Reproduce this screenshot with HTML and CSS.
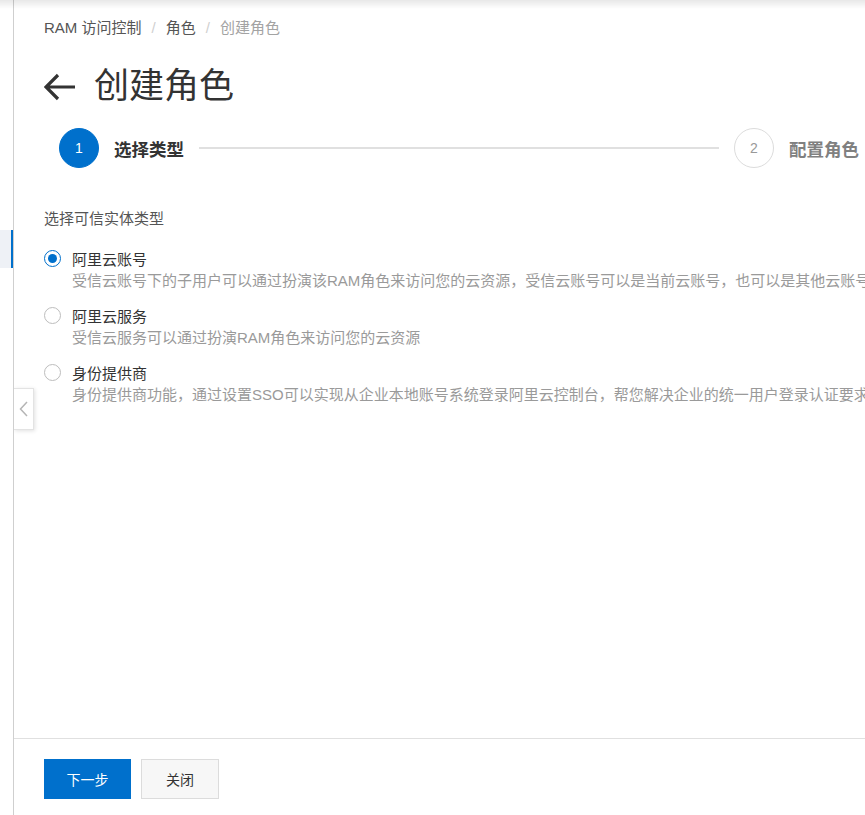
FILE: index.html
```html
<!DOCTYPE html>
<html lang="zh-CN">
<head>
<meta charset="utf-8">
<title>创建角色</title>
<link rel="stylesheet" href="styles.css">
</head>
<body>
<div class="topshadow"></div>
<div class="layout">
  <aside class="sidebar">
    <div class="side-active"></div>
  </aside>
  <main class="main">
    <button class="collapse" type="button" aria-label="收起">
      <svg width="9" height="16" viewBox="0 0 9 16"><path d="M8 1 L1.5 8 L8 15" fill="none" stroke="#b5b5b5" stroke-width="1.5"/></svg>
    </button>
    <div class="content">
      <nav class="breadcrumb">
        <span class="crumb">RAM 访问控制</span><span class="sep">/</span><span class="crumb">角色</span><span class="sep">/</span><span class="crumb current">创建角色</span>
      </nav>
      <h1 class="title">
        <svg class="back" width="32" height="28" viewBox="0 0 32 28"><path d="M2 14 H31 M14 2 L2 14 L14 26" fill="none" stroke="#333" stroke-width="3.2"/></svg>
        <span>创建角色</span>
      </h1>
      <div class="steps">
        <div class="step-num active">1</div>
        <div class="step-title active">选择类型</div>
        <div class="step-line"></div>
        <div class="step-num">2</div>
        <div class="step-title">配置角色</div>
      </div>
      <div class="label">选择可信实体类型</div>
      <div class="options">
        <div class="option">
          <div class="opt-head"><span class="radio checked"></span><span>阿里云账号</span></div>
          <div class="opt-desc">受信云账号下的子用户可以通过扮演该RAM角色来访问您的云资源，受信云账号可以是当前云账号，也可以是其他云账号</div>
        </div>
        <div class="option">
          <div class="opt-head"><span class="radio"></span><span>阿里云服务</span></div>
          <div class="opt-desc">受信云服务可以通过扮演RAM角色来访问您的云资源</div>
        </div>
        <div class="option">
          <div class="opt-head"><span class="radio"></span><span>身份提供商</span></div>
          <div class="opt-desc">身份提供商功能，通过设置SSO可以实现从企业本地账号系统登录阿里云控制台，帮您解决企业的统一用户登录认证要求</div>
        </div>
      </div>
    </div>
    <footer class="footer">
      <button class="btn primary" type="button">下一步</button>
      <button class="btn normal" type="button">关闭</button>
    </footer>
  </main>
</div>
</body>
</html>
```
FILE: styles.css
```css
html, body {
  margin: 0;
  padding: 0;
  height: 100%;
  overflow: hidden;
  background: #fff;
}
body {
  font-family: "Liberation Sans", "Noto Sans CJK SC", sans-serif;
  color: #333;
}
.topshadow {
  position: fixed;
  left: 0;
  top: 0;
  width: 100%;
  height: 9px;
  background: linear-gradient(to bottom, rgba(0,0,0,0.09), rgba(0,0,0,0));
  z-index: 5;
  pointer-events: none;
}
.layout {
  display: flex;
  height: 100vh;
}
.sidebar {
  width: 13px;
  flex: none;
  border-right: 1px solid #cfcfcf;
  padding-top: 230px;
  box-sizing: content-box;
}
.side-active {
  height: 38px;
  background: #eef1f6;
  border-right: 2px solid #0070cc;
}
.main {
  position: relative;
  flex: 1;
  display: flex;
  flex-direction: column;
  min-width: 0;
  overflow: hidden;
}
.collapse {
  position: absolute;
  left: 0;
  top: 388px;
  width: 20px;
  height: 42px;
  padding: 0;
  border: 1px solid #e3e3e3;
  border-left: none;
  background: #fff;
  box-shadow: 1px 1px 4px rgba(0,0,0,0.12);
  display: flex;
  align-items: center;
  justify-content: center;
  z-index: 2;
}
.content {
  flex: 1;
  padding: 18px 0 0 30px;
}
.breadcrumb {
  font-size: 15px;
  line-height: 20px;
  height: 20px;
  color: #555;
  white-space: nowrap;
}
.crumb.current {
  color: #a3a3a3;
}
.sep {
  color: #d0d0d0;
  margin: 0 10px;
}
.title {
  margin: 24px 0 0 0;
  height: 48px;
  display: flex;
  align-items: center;
  font-size: 35px;
  font-weight: normal;
  line-height: 48px;
  color: #333;
}
.back {
  margin-right: 18px;
  margin-top: 1px;
}
.steps {
  margin-top: 18px;
  padding: 0 6px 0 15px;
  display: flex;
  align-items: center;
  height: 40px;
}
.step-num {
  width: 38px;
  height: 38px;
  border: 1px solid #dcdcdc;
  border-radius: 50%;
  display: flex;
  align-items: center;
  justify-content: center;
  font-size: 14px;
  color: #999;
  flex: none;
}
.step-num.active {
  background: #0070cc;
  border-color: #0070cc;
  color: #fff;
}
.step-title {
  margin-left: 15px;
  font-size: 17.5px;
  font-weight: bold;
  color: #808080;
  white-space: nowrap;
  flex: none;
}
.step-title.active {
  color: #333;
}
.step-line {
  flex: 1;
  height: 2px;
  background: #e0e0e0;
  margin: 0 15px;
}
.label {
  margin-top: 41px;
  font-size: 15px;
  line-height: 20px;
  color: #555;
}
.options {
  margin-top: 18px;
  display: flex;
  flex-direction: column;
  gap: 11px;
}
.opt-head {
  display: flex;
  align-items: center;
  height: 22px;
  font-size: 15px;
  color: #333;
  white-space: nowrap;
}
.radio {
  width: 15px;
  height: 15px;
  border: 1px solid #bdbdbd;
  border-radius: 50%;
  margin: 0 11px 0 0;
  position: relative;
  flex: none;
  background: #fff;
}
.radio.checked {
  border-color: #0070cc;
}
.radio.checked::after {
  content: "";
  position: absolute;
  left: 3px;
  top: 3px;
  width: 9px;
  height: 9px;
  border-radius: 50%;
  background: #0070cc;
}
.opt-desc {
  padding-left: 28px;
  font-size: 15px;
  line-height: 24px;
  color: #9a9a9a;
  white-space: nowrap;
}
.footer {
  flex: none;
  box-sizing: border-box;
  height: 77px;
  border-top: 1px solid #e0e0e0;
  padding: 20px 0 0 30px;
  display: flex;
  gap: 10px;
  align-items: flex-start;
}
.btn {
  height: 40px;
  font-family: inherit;
  font-size: 14px;
  padding: 0;
  cursor: pointer;
}
.btn.primary {
  width: 87px;
  background: #0070cc;
  border: none;
  color: #fff;
}
.btn.normal {
  width: 78px;
  background: #f7f7f7;
  border: 1px solid #dcdcdc;
  color: #333;
}
```
